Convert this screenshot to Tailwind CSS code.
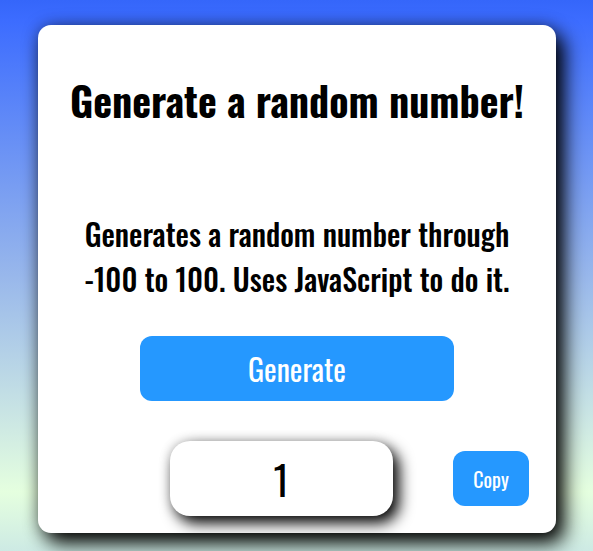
<!DOCTYPE html>
<html lang="en">
<head>
<meta charset="utf-8">
<meta name="viewport" content="width=device-width, initial-scale=1">
<title>Random number generator</title>
<script src="https://cdn.jsdelivr.net/npm/@tailwindcss/browser@4"></script>
</head>
<body class="min-h-screen overflow-hidden bg-[linear-gradient(#3566fa_0px,#3c6cff_20px,#98b7eb_275px,#cfeae3_430px,#e5ffdf_492px,#cdeae4_551px)] px-[38px] pt-[25px] font-[Oswald,'Liberation_Sans_Narrow','Liberation_Sans',sans-serif] text-black">
<main class="mr-[-1px] flex flex-col items-center rounded-[13px] bg-white px-6 pt-[45px] pb-[17px] text-center shadow-[8px_10px_20px_#000,0px_0px_16px_#00000059]">
  <h1 class="text-[40px] leading-[60px] font-bold whitespace-nowrap">Generate a random number!</h1>
  <p class="mt-[81px] text-[30px] leading-[45px] font-medium whitespace-nowrap">Generates a random number through<br>-100 to 100. Uses JavaScript to do it.</p>
  <button type="button" class="mt-[35px] h-[65px] w-[314px] rounded-xl bg-[#2598ff] text-[30px] text-white">Generate</button>
  <div class="mt-10 grid w-full grid-cols-[1fr_223px_1fr] items-center">
    <output class="col-start-2 -ml-4 flex h-[75px] w-[223px] items-center justify-center rounded-[20px] bg-white text-[40px] shadow-[6px_7px_15px_#000,0px_0px_12px_#00000033]">1</output>
    <button type="button" class="mr-[3px] h-[55px] w-[76px] justify-self-end rounded-xl bg-[#2598ff] text-[20px] text-white">Copy</button>
  </div>
</main>
</body>
</html>
